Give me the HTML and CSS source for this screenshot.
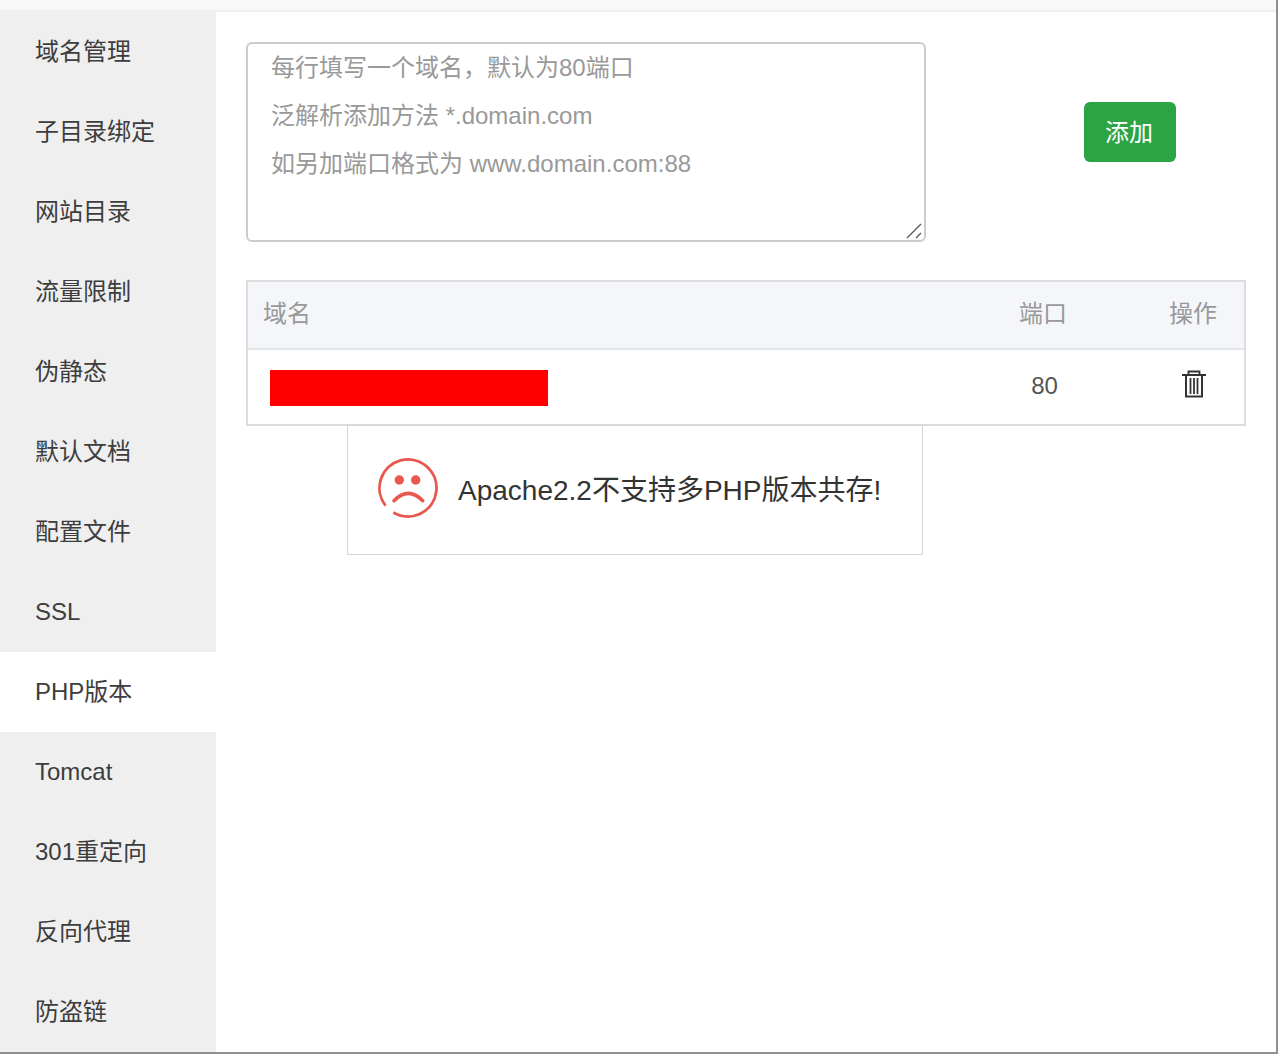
FILE: index.html
```html
<!DOCTYPE html>
<html lang="zh-CN">
<head>
<meta charset="utf-8">
<title>网站设置</title>
<link rel="stylesheet" href="styles.css">
</head>
<body>
<div class="frame">
  <div class="topbar"></div>
  <div class="layout">
    <ul class="menu">
      <li>域名管理</li>
      <li>子目录绑定</li>
      <li>网站目录</li>
      <li>流量限制</li>
      <li>伪静态</li>
      <li>默认文档</li>
      <li>配置文件</li>
      <li>SSL</li>
      <li class="active">PHP版本</li>
      <li>Tomcat</li>
      <li>301重定向</li>
      <li>反向代理</li>
      <li>防盗链</li>
    </ul>
    <main class="content">
      <div class="add-row">
        <div class="domains-wrap">
          <textarea class="domains" placeholder="每行填写一个域名，默认为80端口&#10;泛解析添加方法 *.domain.com&#10;如另加端口格式为 www.domain.com:88"></textarea>
          <svg class="grip" width="16" height="16" viewBox="0 0 16 16" fill="none" stroke="#555" stroke-width="1.300">
            <path d="M1 15L15 1M10 15l5-5"/>
          </svg>
        </div>
        <button class="add-btn" type="button">添加</button>
      </div>
      <table class="domain-table">
        <thead>
          <tr>
            <th class="col-name">域名</th>
            <th class="col-port">端口</th>
            <th class="col-op">操作</th>
          </tr>
        </thead>
        <tbody>
          <tr>
            <td class="cell-name"><span class="redacted"></span></td>
            <td class="cell-port">80</td>
            <td class="cell-op">
              <svg class="trash" width="24" height="28" viewBox="0 0 24 28" fill="none" stroke="#333" stroke-width="2">
                <path d="M0 5h24"/>
                <path d="M6.500 5V1.500h11V5" stroke-width="1.800"/>
                <path d="M4 5v21.500h16V5"/>
                <path d="M8.500 8v16M12 8v16M15.500 8v16" stroke-width="1.800"/>
              </svg>
            </td>
          </tr>
        </tbody>
      </table>
      <div class="toast">
        <svg class="sad" width="60" height="60" viewBox="0 0 60 60" fill="none">
          <path d="M7.540 47.550A28.500 28.500 0 1 1 15.320 54.430" stroke="#e8584e" stroke-width="2.800"/>
          <circle cx="21.300" cy="22" r="4.700" fill="#e8584e"/>
          <circle cx="37.700" cy="22" r="4.700" fill="#e8584e"/>
          <path d="M16 42.700Q30.300 28 44.700 42.700" stroke="#e8584e" stroke-width="3.600" stroke-linecap="round"/>
        </svg>
        <span class="toast-text">Apache2.2不支持多PHP版本共存!</span>
      </div>
    </main>
  </div>
</div>
</body>
</html>
```

FILE: styles.css
```css
* {
  box-sizing: border-box;
}

html,
body {
  margin: 0;
  padding: 0;
  background: #fff;
}

body {
  width: 1278px;
  height: 1054px;
  overflow: hidden;
  font-family: "Liberation Sans", "Noto Sans CJK SC", sans-serif;
  color: #444;
}

.frame {
  width: 1278px;
  height: 1054px;
  border-right: 2px solid #8f8f8f;
  border-bottom: 2px solid #8f8f8f;
  display: flex;
  flex-direction: column;
}

.topbar {
  height: 12px;
  background: #f8f8f8;
  border-bottom: 2px solid #efefef;
  flex: none;
}

.layout {
  display: flex;
  flex: 1;
}

.menu {
  width: 216px;
  margin: 0;
  padding: 0;
  list-style: none;
  background: #efefef;
  flex: none;
}

.menu li {
  height: 80px;
  padding-left: 35px;
  font-size: 24px;
  line-height: 80px;
  color: #3d3d3d;
}

.menu li.active {
  background: #fff;
}

.content {
  position: relative;
  flex: 1;
  padding: 30px 30px 0;
}

.add-row {
  display: flex;
  align-items: flex-start;
}

.domains-wrap {
  position: relative;
  width: 680px;
  height: 200px;
  flex: none;
}

.domains {
  display: block;
  width: 100%;
  height: 100%;
  padding: 0 23px;
  border: 2px solid #ccc;
  border-radius: 6px;
  outline: none;
  resize: none;
  font-family: inherit;
  font-size: 24px;
  line-height: 48px;
  color: #555;
  background: #fff;
}

.domains::placeholder {
  color: #999;
  opacity: 1;
}

.grip {
  position: absolute;
  right: 4px;
  bottom: 3px;
}

.add-btn {
  width: 92px;
  height: 60px;
  margin: 60px 0 0 158px;
  padding: 0 2px 4px 0;
  border: 0;
  border-radius: 6px;
  background: #2ca444;
  color: #fff;
  font-family: inherit;
  font-size: 24px;
}

.domain-table {
  width: 1000px;
  margin-top: 38px;
  border: 2px solid #ddd;
  border-collapse: separate;
  border-spacing: 0;
  table-layout: fixed;
}

.domain-table th {
  height: 68px;
  padding: 0 0 8px;
  background: #f4f6f9;
  border-bottom: 2px solid #e2e6ea;
  font-size: 24px;
  font-weight: 400;
  color: #999;
  text-align: left;
}

.domain-table td {
  height: 74px;
  padding: 0;
  font-size: 24px;
  color: #555;
}

.domain-table .col-name {
  width: 724px;
  padding-left: 15px;
}

.domain-table .col-port {
  width: 142px;
  text-align: center;
}

.domain-table .cell-port {
  padding: 0 0 2px 3px;
  text-align: center;
}

.domain-table .col-op {
  padding-left: 28px;
  text-align: center;
}

.domain-table .cell-op {
  padding-left: 30px;
}

.domain-table .cell-name {
  padding: 2px 0 0 22px;
}

.redacted {
  display: block;
  width: 278px;
  height: 36px;
  background: #f00;
}

.trash {
  display: block;
  margin: -6px auto 0;
}

.toast {
  position: absolute;
  left: 131px;
  top: 413px;
  width: 576px;
  height: 130px;
  display: flex;
  align-items: center;
  gap: 20px;
  padding: 0 0 0 30px;
  background: #fff;
  border: 1px solid #d6d6d6;
}

.sad {
  flex: none;
  margin-bottom: 4px;
}

.toast-text {
  margin-bottom: 4px;
  font-size: 28px;
  color: #333;
  white-space: nowrap;
}
```
